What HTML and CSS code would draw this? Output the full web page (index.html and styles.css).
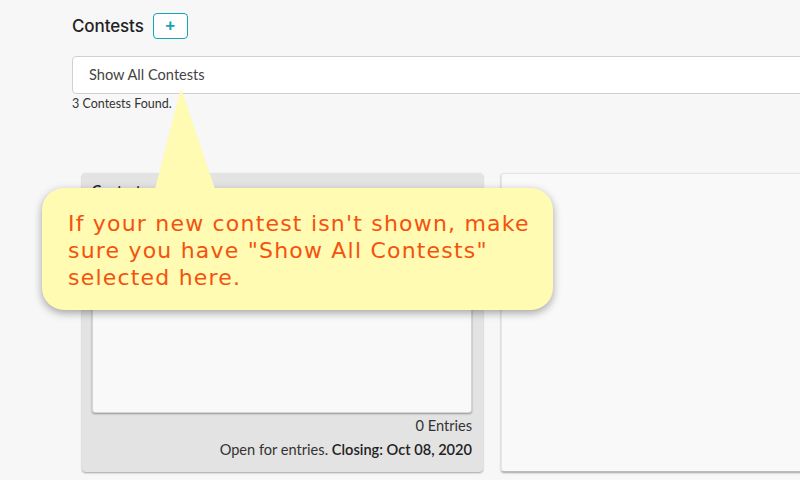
FILE: index.html
```html
<!DOCTYPE html>
<html>
<head>
    <meta charset="UTF-8">
    <title>Contests</title>
    <link rel="stylesheet" href="styles.css">
</head>
<body>
    <div class="page">
        <div class="head">
            <h1 class="title">Contests</h1>
            <button class="add_btn">+</button>
        </div>
        <div class="select">Show All Contests</div>
        <div class="found">3 Contests Found.</div>

        <div class="cards">
            <div class="card card_open">
                <div class="card_title">Contest</div>
                <div class="card_body"></div>
                <div class="entries">0 Entries</div>
                <div class="status">Open for entries. <b>Closing: Oct 08, 2020</b></div>
            </div>
            <div class="card card_plain">
                <div class="card_body plain_body"></div>
            </div>
        </div>
    </div>

    <div class="callout">
        <div class="callout_tip"></div>
        <p>If your new contest isn't shown, make sure you have "Show All Contests" selected here.</p>
    </div>
</body>
</html>
```

FILE: styles.css
```css
html, body {
    margin: 0;
    background: #f7f7f7;
    overflow: hidden;
    height: 480px;
}

.page {
    padding: 13px 0 0 72px;
    font-family: "Lato", "Noto Sans", sans-serif;
    color: #333;
}

.head {
    display: flex;
    align-items: center;
    gap: 9px;
}

.title {
    margin: 0;
    font-family: "Inter", sans-serif;
    font-size: 17px;
    font-weight: 500;
    color: #222;
    letter-spacing: -0.1px;
}

.add_btn {
    width: 35px;
    height: 26px;
    border: 1px solid #17a2b8;
    border-radius: 4px;
    background: #fff;
    color: #17a2b8;
    font-size: 17px;
    font-weight: bold;
    line-height: 20px;
    padding: 0;
}

.select {
    margin-top: 17px;
    width: 760px;
    height: 38px;
    box-sizing: border-box;
    border: 1px solid #ccd1d5;
    border-radius: 4px;
    background: #fff;
    padding: 0 16px;
    font-size: 14.6px;
    line-height: 36px;
    color: #444;
}

.found {
    font-size: 12.5px;
    margin-top: 2px;
    color: #333;
}

.cards {
    display: grid;
    grid-template-columns: 401px 401px;
    gap: 18px;
    margin: 62px 0 0 10px;
}

.card {
    height: 299px;
    box-sizing: border-box;
    border-radius: 4px;
}

.card_open {
    background: #e3e3e3;
    box-shadow: 0 1px 2px rgba(0, 0, 0, 0.35);
    padding: 8px 11px 0 10px;
    display: flex;
    flex-direction: column;
}

.card_title {
    font-size: 14px;
    font-weight: bold;
    color: #222;
    height: 22px;
}

.card_body {
    background: #f9f9f9;
    height: 208px;
    border: 1px solid #d4d4d4;
    border-radius: 3px;
    box-shadow: 0 1px 2px rgba(0, 0, 0, 0.35);
}

.entries {
    text-align: right;
    font-size: 14.6px;
    margin-top: 4px;
    color: #333;
}

.status {
    text-align: right;
    font-size: 14.6px;
    margin-top: 7px;
    color: #333;
}

.status b {
    font-weight: 600;
    color: #222;
}

.card_plain {
    background: #f7f7f7;
    padding: 0;
}

.plain_body {
    height: 100%;
    box-sizing: border-box;
    border: 1px solid #e6e6e6;
    border-bottom-color: #bbb;
}

.callout {
    position: absolute;
    left: 42px;
    top: 188px;
    width: 511px;
    height: 122px;
    box-sizing: border-box;
    background: #fffbb3;
    border-radius: 22px;
    box-shadow: 0 3px 8px rgba(0, 0, 0, 0.35);
    padding: 22px 0 0 26px;
}

.callout_tip {
    position: absolute;
    left: 113px;
    top: -100px;
    width: 60px;
    height: 101px;
    background: #fffbb3;
    clip-path: polygon(26px 0, 0 100%, 100% 100%);
    filter: drop-shadow(2px 0 3px rgba(0, 0, 0, 0.3));
}

.callout p {
    margin: 0;
    font-family: "DejaVu Sans", sans-serif;
    font-size: 22px;
    letter-spacing: 1.2px;
    line-height: 27px;
    color: #f4520f;
}
```
